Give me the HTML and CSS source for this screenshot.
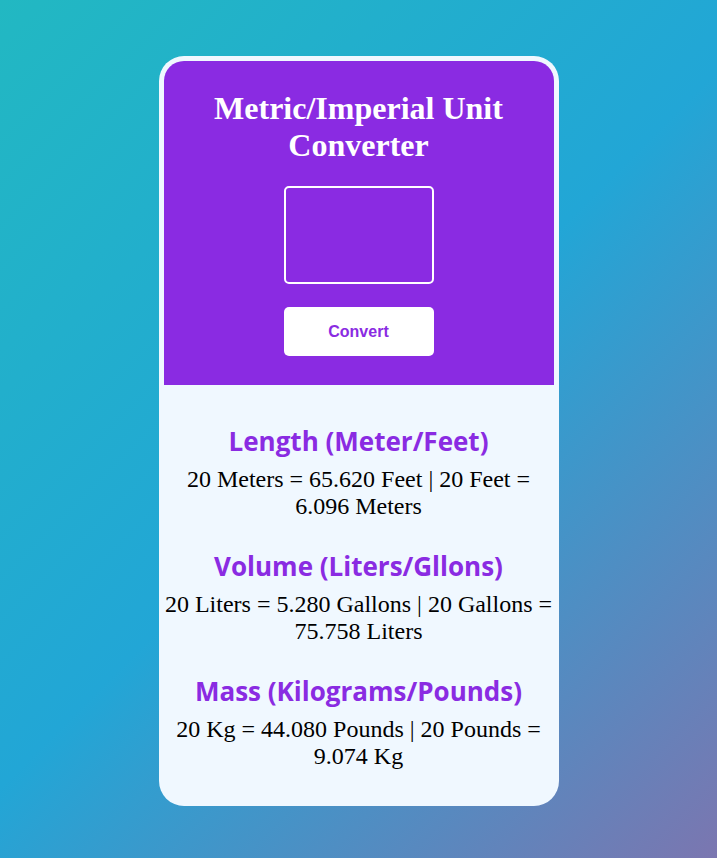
FILE: index.html
```html
<!DOCTYPE html>
<html lang="en">
  <head>
    <meta charset="UTF-8" />
    <meta name="viewport" content="width=device-width, initial-scale=1.0" />
    <title>Unit Converter</title>
    <link rel="stylesheet" href="styles.css">
  </head>
  <body>
    <div class="page">
      <div class="card">
        <div class="converter">
          <h1>Metric/Imperial Unit Converter</h1>
          <input type="text" id="inputValue" class="value-input" />
          <button id="convertBtn" class="convert-btn">Convert</button>
        </div>
        <div class="results">
          <div class="result">
            <h2>Length (Meter/Feet)</h2>
            <p id="length">20 Meters = 65.620 Feet | 20 Feet = 6.096 Meters</p>
          </div>
          <div class="result">
            <h2>Volume (Liters/Gllons)</h2>
            <p id="volume">20 Liters = 5.280 Gallons | 20 Gallons = 75.758 Liters</p>
          </div>
          <div class="result">
            <h2>Mass (Kilograms/Pounds)</h2>
            <p id="mass">20 Kg = 44.080 Pounds | 20 Pounds = 9.074 Kg</p>
          </div>
        </div>
      </div>
    </div>
  </body>
</html>
```

FILE: styles.css
```css
body {
  margin: 0;
  font-family: "Liberation Serif", "Times New Roman", serif;
}

.page {
  min-height: 100vh;
  box-sizing: border-box;
  padding-top: 4px;
  display: flex;
  justify-content: center;
  align-items: center;
  background: linear-gradient(135deg, #22b8c2 0%, #22a6d6 50%, #7b76b0 100%);
}

.card {
  width: 400px;
  box-sizing: border-box;
  padding: 5px;
  background: #f0f8ff;
  border-radius: 25px;
}

.converter {
  background: #8a2be2;
  border-radius: 20px 20px 0 0;
  padding: 5px 20px 29px;
  display: flex;
  flex-direction: column;
  align-items: center;
}

.converter h1 {
  color: #fff;
  font-size: 32px;
  text-align: center;
  margin: 24px 0 22px;
}

.value-input {
  width: 150px;
  height: 98px;
  box-sizing: border-box;
  background: transparent;
  border: 2px solid #fff;
  border-radius: 5px;
  color: #fff;
  font-size: 24px;
  text-align: center;
  outline: none;
}

.convert-btn {
  width: 150px;
  height: 49px;
  margin-top: 23px;
  background: #fff;
  color: #8a2be2;
  border: none;
  border-radius: 5px;
  font-family: "Liberation Sans", Arial, sans-serif;
  font-weight: bold;
  font-size: 16px;
  cursor: pointer;
}

.results {
  padding: 42px 0 32px;
  text-align: center;
}

.result + .result {
  margin-top: 33px;
}

.result h2 {
  color: #8a2be2;
  font-family: "Open Sans", sans-serif;
  font-size: 26px;
  line-height: 29px;
  margin: 0 0 10px;
}

.result p {
  font-size: 24px;
  line-height: 26.5px;
  margin: 0;
}
```
